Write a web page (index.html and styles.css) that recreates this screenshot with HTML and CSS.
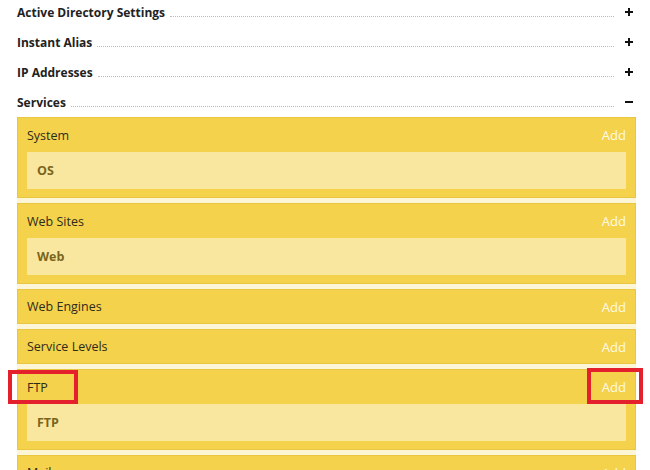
FILE: index.html
```html
<!DOCTYPE html>
<html lang="en">

<head>
  <meta charset="UTF-8">
  <meta name="viewport" content="width=device-width, initial-scale=1.0">
  <title>Server Settings</title>
  <link rel="stylesheet" href="styles.css">
</head>

<body>
  <div class="settings">
    <!-- Collapsed sections -->
    <div class="section-row">
      <span class="section-title">Active Directory Settings</span>
      <span class="dots"></span>
      <svg class="toggle" width="10" height="10" viewBox="0 0 10 10"><path d="M5 1v8M1 5h8" /></svg>
    </div>
    <div class="section-row">
      <span class="section-title">Instant Alias</span>
      <span class="dots"></span>
      <svg class="toggle" width="10" height="10" viewBox="0 0 10 10"><path d="M5 1v8M1 5h8" /></svg>
    </div>
    <div class="section-row">
      <span class="section-title">IP Addresses</span>
      <span class="dots"></span>
      <svg class="toggle" width="10" height="10" viewBox="0 0 10 10"><path d="M5 1v8M1 5h8" /></svg>
    </div>
    <div class="section-row">
      <span class="section-title">Services</span>
      <span class="dots"></span>
      <svg class="toggle" width="10" height="10" viewBox="0 0 10 10"><path d="M1 5h8" /></svg>
    </div>

    <!-- Services list -->
    <div class="services">
      <div class="service has-items">
        <div class="service-head"><span>System</span><span class="add">Add</span></div>
        <div class="service-item">OS</div>
      </div>
      <div class="service has-items">
        <div class="service-head"><span>Web Sites</span><span class="add">Add</span></div>
        <div class="service-item">Web</div>
      </div>
      <div class="service">
        <div class="service-head"><span>Web Engines</span><span class="add">Add</span></div>
      </div>
      <div class="service">
        <div class="service-head"><span>Service Levels</span><span class="add">Add</span></div>
      </div>
      <div class="service has-items">
        <div class="service-head">
          <span class="mark mark-name">FTP</span>
          <span class="add mark mark-add">Add</span>
        </div>
        <div class="service-item">FTP</div>
      </div>
      <div class="service">
        <div class="service-head"><span>Mail</span><span class="add">Add</span></div>
      </div>
    </div>
  </div>
</body>

</html>
```

FILE: styles.css
```css
body {
  margin: 0;
  font-family: "Open Sans", "Noto Sans", sans-serif;
  font-size: 12px;
  color: #222;
  background-color: #fff;
  overflow: hidden;
}

.settings {
  padding-left: 17px;
  width: 619px;
}

/* Collapsible section rows */
.section-row {
  display: flex;
  align-items: center;
  height: 24px;
  margin-bottom: 6px;
}

.section-title {
  font-weight: 700;
  color: #222;
  white-space: nowrap;
}

.dots {
  flex: 1;
  border-bottom: 1px dotted #bbb;
  margin: 8px 10px 0 5px;
  height: 0;
}

.toggle {
  margin-right: 2px;
  stroke: #111;
  stroke-width: 2;
  fill: none;
}

/* Services */
.services {
  display: flex;
  flex-direction: column;
  gap: 5px;
  margin-top: -3px;
  background-color: #fdf6d6;
}

.service {
  background-color: #f4d24b;
  border: 1px solid #e9c640;
}

.service.has-items {
  padding-bottom: 8px;
}

.service-head {
  display: flex;
  justify-content: space-between;
  align-items: center;
  height: 33px;
  padding: 0 9px;
  font-size: 12.5px;
  color: #2e2a1c;
}

.has-items .service-head {
  height: 34px;
}

.add {
  font-size: 13px;
  color: #fffae6;
}

.service-item {
  margin: 0 9px;
  height: 37px;
  line-height: 37px;
  padding-left: 10px;
  background-color: #f9e79f;
  color: #7a6520;
  font-size: 12.5px;
  font-weight: 700;
}

/* Red highlight boxes */
.mark {
  position: relative;
}

.mark::after {
  content: "";
  position: absolute;
  border: 4px solid #e3202b;
}

.mark-name::after {
  left: -19px;
  right: -30px;
  top: -9px;
  bottom: -8px;
}

.mark-add::after {
  left: -15px;
  right: -17px;
  top: -10px;
  bottom: -8px;
}
```
